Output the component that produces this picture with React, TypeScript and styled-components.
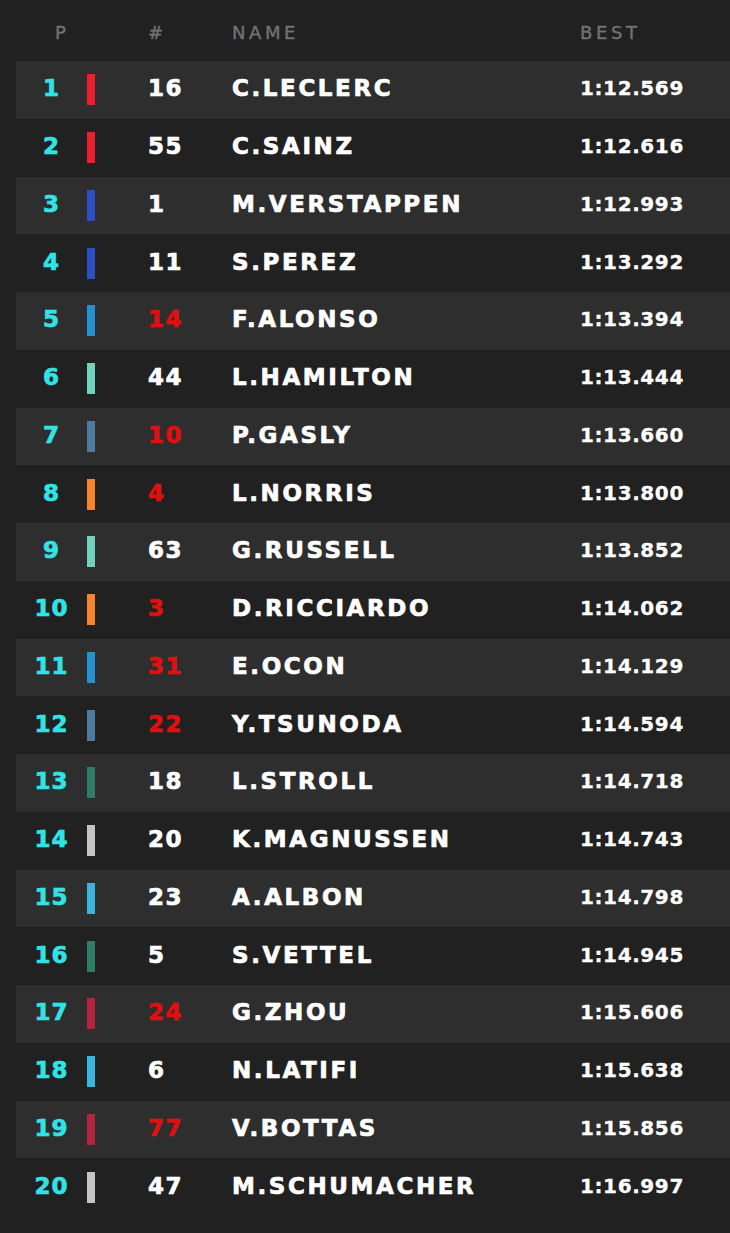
import styled, { createGlobalStyle } from 'styled-components';

const GlobalStyle = createGlobalStyle`
  html, body {
    margin: 0;
    padding: 0;
    background-color: #212121;
  }
`;

type Driver = {
  pos: number;
  num: number;
  name: string;
  best: string;
  team: string;
  penalty?: boolean;
};

const teams: Record<string, string> = {
  ferrari: '#e8212a',
  redbull: '#2a50c4',
  alpine: '#2591d0',
  mercedes: '#6fd3be',
  alphatauri: '#4e7a9c',
  mclaren: '#f5852a',
  aston: '#2e7e65',
  haas: '#c4c4c4',
  williams: '#38b6dc',
  alfa: '#b1253f',
};

const drivers: Driver[] = [
  { pos: 1, num: 16, name: 'C.LECLERC', best: '1:12.569', team: 'ferrari' },
  { pos: 2, num: 55, name: 'C.SAINZ', best: '1:12.616', team: 'ferrari' },
  { pos: 3, num: 1, name: 'M.VERSTAPPEN', best: '1:12.993', team: 'redbull' },
  { pos: 4, num: 11, name: 'S.PEREZ', best: '1:13.292', team: 'redbull' },
  { pos: 5, num: 14, name: 'F.ALONSO', best: '1:13.394', team: 'alpine', penalty: true },
  { pos: 6, num: 44, name: 'L.HAMILTON', best: '1:13.444', team: 'mercedes' },
  { pos: 7, num: 10, name: 'P.GASLY', best: '1:13.660', team: 'alphatauri', penalty: true },
  { pos: 8, num: 4, name: 'L.NORRIS', best: '1:13.800', team: 'mclaren', penalty: true },
  { pos: 9, num: 63, name: 'G.RUSSELL', best: '1:13.852', team: 'mercedes' },
  { pos: 10, num: 3, name: 'D.RICCIARDO', best: '1:14.062', team: 'mclaren', penalty: true },
  { pos: 11, num: 31, name: 'E.OCON', best: '1:14.129', team: 'alpine', penalty: true },
  { pos: 12, num: 22, name: 'Y.TSUNODA', best: '1:14.594', team: 'alphatauri', penalty: true },
  { pos: 13, num: 18, name: 'L.STROLL', best: '1:14.718', team: 'aston' },
  { pos: 14, num: 20, name: 'K.MAGNUSSEN', best: '1:14.743', team: 'haas' },
  { pos: 15, num: 23, name: 'A.ALBON', best: '1:14.798', team: 'williams' },
  { pos: 16, num: 5, name: 'S.VETTEL', best: '1:14.945', team: 'aston' },
  { pos: 17, num: 24, name: 'G.ZHOU', best: '1:15.606', team: 'alfa', penalty: true },
  { pos: 18, num: 6, name: 'N.LATIFI', best: '1:15.638', team: 'williams' },
  { pos: 19, num: 77, name: 'V.BOTTAS', best: '1:15.856', team: 'alfa', penalty: true },
  { pos: 20, num: 47, name: 'M.SCHUMACHER', best: '1:16.997', team: 'haas' },
];

export default function App() {
  return (
    <Page>
      <GlobalStyle />
      <Header>
        <HeadPos>P</HeadPos>
        <span />
        <HeadCell>#</HeadCell>
        <HeadCell>NAME</HeadCell>
        <HeadCell>BEST</HeadCell>
      </Header>
      {drivers.map((d, i) => (
        <Row key={d.pos} $odd={i % 2 === 0}>
          <Pos>{d.pos}</Pos>
          <BarCell>
            <TeamBar $color={teams[d.team]} />
          </BarCell>
          <Num $red={!!d.penalty}>{d.num}</Num>
          <Name>{d.name}</Name>
          <Best>{d.best}</Best>
        </Row>
      ))}
    </Page>
  );
}

const Page = styled.div`
  width: 730px;
  min-height: 1233px;
  box-sizing: border-box;
  padding: 0 0 0 16px;
  background-color: #212121;
  font-family: 'DejaVu Sans', 'Liberation Sans', sans-serif;
`;

const Grid = styled.div`
  display: grid;
  grid-template-columns: 71px 61px 84px 348px 1fr;
  align-items: center;
`;

const Header = styled(Grid)`
  height: 61px;
  padding-top: 3px;
  box-sizing: border-box;
`;

const HeadCell = styled.span`
  font-size: 18px;
  font-weight: 400;
  letter-spacing: 3.6px;
  color: #727272;
  -webkit-text-stroke: 0.4px #727272;
`;

const HeadPos = styled(HeadCell)`
  padding-left: 39px;
`;

const Row = styled(Grid)<{ $odd: boolean }>`
  height: 57.75px;
  padding-bottom: 3px;
  box-sizing: border-box;
  background-color: ${(p) => (p.$odd ? '#2e2e2e' : 'transparent')};
  font-weight: 700;
  color: #ffffff;
`;

const Pos = styled.span`
  text-align: center;
  font-size: 23px;
  letter-spacing: 1px;
  color: #32e3e6;
  -webkit-text-stroke: 0.7px #32e3e6;
`;

const BarCell = styled.div`
  display: flex;
  align-items: center;
  padding-top: 3px;
`;

const TeamBar = styled.div<{ $color: string }>`
  width: 8px;
  height: 31px;
  background-color: ${(p) => p.$color};
`;

const Num = styled.span<{ $red: boolean }>`
  font-size: 23px;
  letter-spacing: 1.5px;
  color: ${(p) => (p.$red ? '#e10f0f' : '#ffffff')};
  -webkit-text-stroke: 0.7px ${(p) => (p.$red ? '#e10f0f' : '#ffffff')};
`;

const Name = styled.span`
  font-size: 23px;
  letter-spacing: 2.6px;
  white-space: nowrap;
  -webkit-text-stroke: 0.7px #ffffff;
`;

const Best = styled.span`
  font-size: 20px;
  letter-spacing: 0.6px;
  -webkit-text-stroke: 0.3px #ffffff;
`;
